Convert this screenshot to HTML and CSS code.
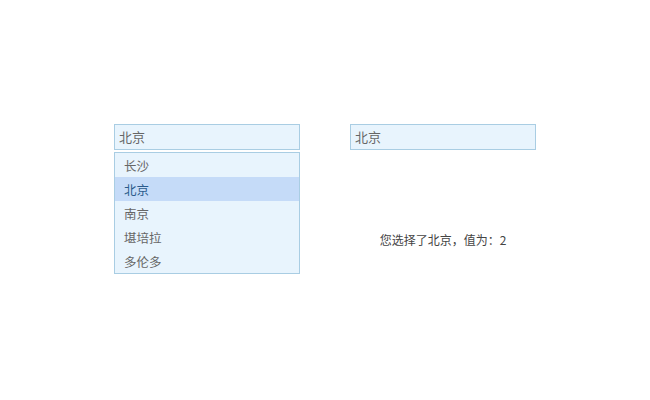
FILE: index.html
```html
<!DOCTYPE html>
<html lang="zh-CN">
  <head>
    <meta charset="UTF-8" />
    <title>下拉选择</title>
    <link rel="stylesheet" href="styles.css">
  </head>
  <body>
    <main class="demo">
      <!-- Open combobox -->
      <div class="combo">
        <div class="combo-input">北京</div>
        <ul class="combo-list">
          <li>长沙</li>
          <li class="active">北京</li>
          <li>南京</li>
          <li>堪培拉</li>
          <li>多伦多</li>
        </ul>
      </div>

      <!-- Closed combobox with result -->
      <div class="combo">
        <div class="combo-input">北京</div>
        <p class="result">您选择了北京，值为：2</p>
      </div>
    </main>
  </body>
</html>
```

FILE: styles.css
```css
:root {
  --border: #a9cde3;
  --bg-field: #e8f4fd;
  --bg-active: #c5dbf8;
  --text: #666666;
  --text-active: #2b5b8c;
}

* {
  margin: 0;
  padding: 0;
  box-sizing: border-box;
}

body {
  background: #ffffff;
  font-family: "Noto Sans CJK SC", "DejaVu Sans", sans-serif;
  font-size: 12px;
  color: var(--text);
}

.demo {
  display: flex;
  gap: 50px;
  padding: 124px 0 0 114px;
}

.combo {
  width: 186px;
}

.combo-input {
  height: 26px;
  line-height: 24px;
  padding: 0 4px;
  border: 1px solid var(--border);
  background: var(--bg-field);
  font-size: 13px;
}

.combo-list {
  list-style: none;
  margin-top: 2px;
  border: 1px solid var(--border);
  background: var(--bg-field);
}

.combo-list li {
  height: 24px;
  line-height: 22px;
  padding: 2px 9px 0;
  font-size: 12.5px;
}

.combo-list li.active {
  background: var(--bg-active);
  color: var(--text-active);
}

.result {
  margin-top: 81px;
  text-align: center;
  color: #444444;
  line-height: 18px;
}
```
